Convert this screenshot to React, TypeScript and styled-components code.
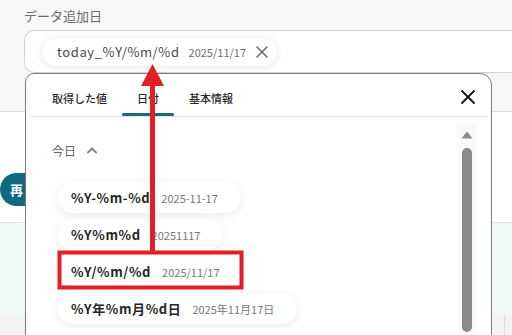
import React from 'react'
import styled, { createGlobalStyle } from 'styled-components'

const GlobalStyle = createGlobalStyle`
  html, body {
    margin: 0;
    padding: 0;
    background: #f7f7f7;
    font-family: "Noto Sans CJK JP", "Noto Sans", sans-serif;
  }
  * {
    box-sizing: border-box;
  }
`

const Page = styled.div`
  position: relative;
  width: 512px;
  height: 335px;
  overflow: hidden;
  background: #f7f7f7;
`

const FieldArea = styled.div`
  padding: 7px 0 0 24px;
`

const Label = styled.div`
  font-size: 13px;
  line-height: 18px;
  color: #6b6b6b;
`

const Field = styled.div`
  margin-top: 5px;
  width: 510px;
  height: 43px;
  background: #fff;
  border: 1px solid #cfd3d8;
  border-right: none;
  border-radius: 10px 0 0 10px;
  display: flex;
  align-items: center;
  padding-left: 17px;
`

const Chip = styled.div`
  height: 28px;
  display: flex;
  align-items: center;
  gap: 9px;
  padding: 0 8px 0 15px;
  border-radius: 14px;
  background: #fff;
  box-shadow: 0 1px 7px rgba(0, 0, 0, 0.1);
`

const ChipName = styled.span`
  font-size: 13px;
  font-weight: 400;
  color: #4a4a4a;
  letter-spacing: 0.6px;
`

const ChipValue = styled.span`
  font-size: 11px;
  color: #6f6f6f;
`

const Under = styled.div`
  margin-top: 38px;
  border-top: 1px solid #dcdcdc;
  background: #fff;
`

const ButtonRow = styled.div`
  height: 110px;
  display: flex;
  align-items: flex-start;
  padding-top: 61px;
`

const TealButton = styled.div`
  width: 90px;
  height: 33px;
  border-radius: 17px;
  background: #0f6a80;
  color: #fff;
  font-size: 13px;
  font-weight: 700;
  display: flex;
  align-items: center;
  padding-left: 10px;
`

const Mint = styled.div`
  border-top: 1px solid #e2e6e6;
  height: 93px;
  background: #f1f8f8;
`

const Foot = styled.div`
  height: 40px;
  background: #f3f3f3;
  display: flex;
  justify-content: flex-end;
  padding-right: 7px;
`

const FootLine = styled.div`
  width: 1px;
  background: #dedede;
`

const Panel = styled.div`
  position: absolute;
  left: 25px;
  top: 73px;
  width: 467px;
  height: 290px;
  background: #fff;
  border: 1px solid #7a7a7a;
  border-radius: 9px 12px 0 0;
  display: flex;
  flex-direction: column;
`

const TabBar = styled.div`
  position: relative;
  height: 43px;
  display: flex;
  align-items: stretch;
  padding-left: 8px;
  margin: 0 3px;
  border-bottom: 1px solid #e4e4e4;
`

const Tab = styled.div<{ $active?: boolean }>`
  position: relative;
  padding: 0 15px;
  display: flex;
  align-items: center;
  padding-top: 5px;
  font-size: 11px;
  font-weight: 500;
  color: #2a2a2a;

  &::after {
    content: '';
    display: ${p => (p.$active ? 'block' : 'none')};
    position: absolute;
    left: 0;
    right: 0;
    bottom: 0;
    height: 3px;
    border-radius: 2px;
    background: #196a7e;
  }
`

const CloseButton = styled.div`
  margin-left: auto;
  margin-right: 12px;
  display: flex;
  align-items: center;
  padding-top: 4px;
`

const Body = styled.div`
  flex: 1;
  display: flex;
`

const List = styled.div`
  flex: 1;
  padding: 24px 0 0 26px;
`

const SectionHead = styled.div`
  display: flex;
  align-items: center;
  gap: 10px;
  height: 18px;
  font-size: 12px;
  color: #666;
`

const Items = styled.div`
  margin-top: 23px;
  padding-left: 5px;
  display: flex;
  flex-direction: column;
  align-items: flex-start;
  gap: 6px;
`

const Item = styled.div`
  height: 31px;
  display: flex;
  align-items: center;
  gap: 11px;
  padding: 0 23px 0 14px;
  border-radius: 16px;
  background: #fff;
  box-shadow: 0 2px 9px rgba(0, 0, 0, 0.08);
`

const ItemName = styled.span`
  font-size: 13px;
  font-weight: 700;
  color: #262626;
  letter-spacing: 0.6px;
`

const ItemValue = styled.span`
  font-size: 11px;
  color: #777;
`

const ScrollTrack = styled.div`
  width: 19px;
  margin: 6px 15px 0 0;
  background: #fafafa;
  display: flex;
  flex-direction: column;
  align-items: center;
  padding-top: 8px;
`

const ScrollThumb = styled.div`
  margin-top: 9px;
  width: 10px;
  height: 184px;
  border-radius: 5px;
  background: #8a8a8a;
`

const Annotation = styled.svg`
  position: absolute;
  left: 0;
  top: 0;
  pointer-events: none;
`

const formats = [
  { name: '%Y-%m-%d', value: '2025-11-17' },
  { name: '%Y%m%d', value: '20251117' },
  { name: '%Y/%m/%d', value: '2025/11/17' },
  { name: '%Y年%m月%d日', value: '2025年11月17日' },
]

const tabs = ['取得した値', '日付', '基本情報']

const App = () => {
  return (
    <Page>
      <GlobalStyle />
      <FieldArea>
        <Label>データ追加日</Label>
        <Field>
          <Chip>
            <ChipName>today_%Y/%m/%d</ChipName>
            <ChipValue>2025/11/17</ChipValue>
            <svg width="14" height="14" viewBox="0 0 14 14">
              <path d="M2 2L12 12M12 2L2 12" stroke="#666" strokeWidth="1.5" strokeLinecap="round" />
            </svg>
          </Chip>
        </Field>
      </FieldArea>
      <Under>
        <ButtonRow>
          <TealButton>再</TealButton>
        </ButtonRow>
        <Mint />
        <Foot>
          <FootLine />
        </Foot>
      </Under>

      <Panel>
        <TabBar>
          {tabs.map(t => (
            <Tab key={t} $active={t === '日付'}>{t}</Tab>
          ))}
          <CloseButton>
            <svg width="16" height="16" viewBox="0 0 16 16">
              <path d="M2 2L14 14M14 2L2 14" stroke="#111" strokeWidth="1.8" strokeLinecap="round" />
            </svg>
          </CloseButton>
        </TabBar>
        <Body>
          <List>
            <SectionHead>
              今日
              <svg width="12" height="8" viewBox="0 0 12 8">
                <path d="M2 6.5L6 2.5L10 6.5" stroke="#888" strokeWidth="2" fill="none" strokeLinecap="round" />
              </svg>
            </SectionHead>
            <Items>
              {formats.map(f => (
                <Item key={f.name}>
                  <ItemName>{f.name}</ItemName>
                  <ItemValue>{f.value}</ItemValue>
                </Item>
              ))}
            </Items>
          </List>
          <ScrollTrack>
            <svg width="12" height="8" viewBox="0 0 12 8">
              <path d="M6 0.5L11.5 7.5H0.5Z" fill="#8a8a8a" />
            </svg>
            <ScrollThumb />
          </ScrollTrack>
        </Body>
      </Panel>

      <Annotation width="512" height="335" viewBox="0 0 512 335">
        <rect x="59.5" y="252.5" width="182" height="35" fill="none" stroke="#e31e24" strokeWidth="4" />
        <rect x="150" y="84" width="5" height="167" fill="#e31e24" />
        <path d="M152.5 64L164 86H141Z" fill="#e31e24" />
      </Annotation>
    </Page>
  )
}

export default App
